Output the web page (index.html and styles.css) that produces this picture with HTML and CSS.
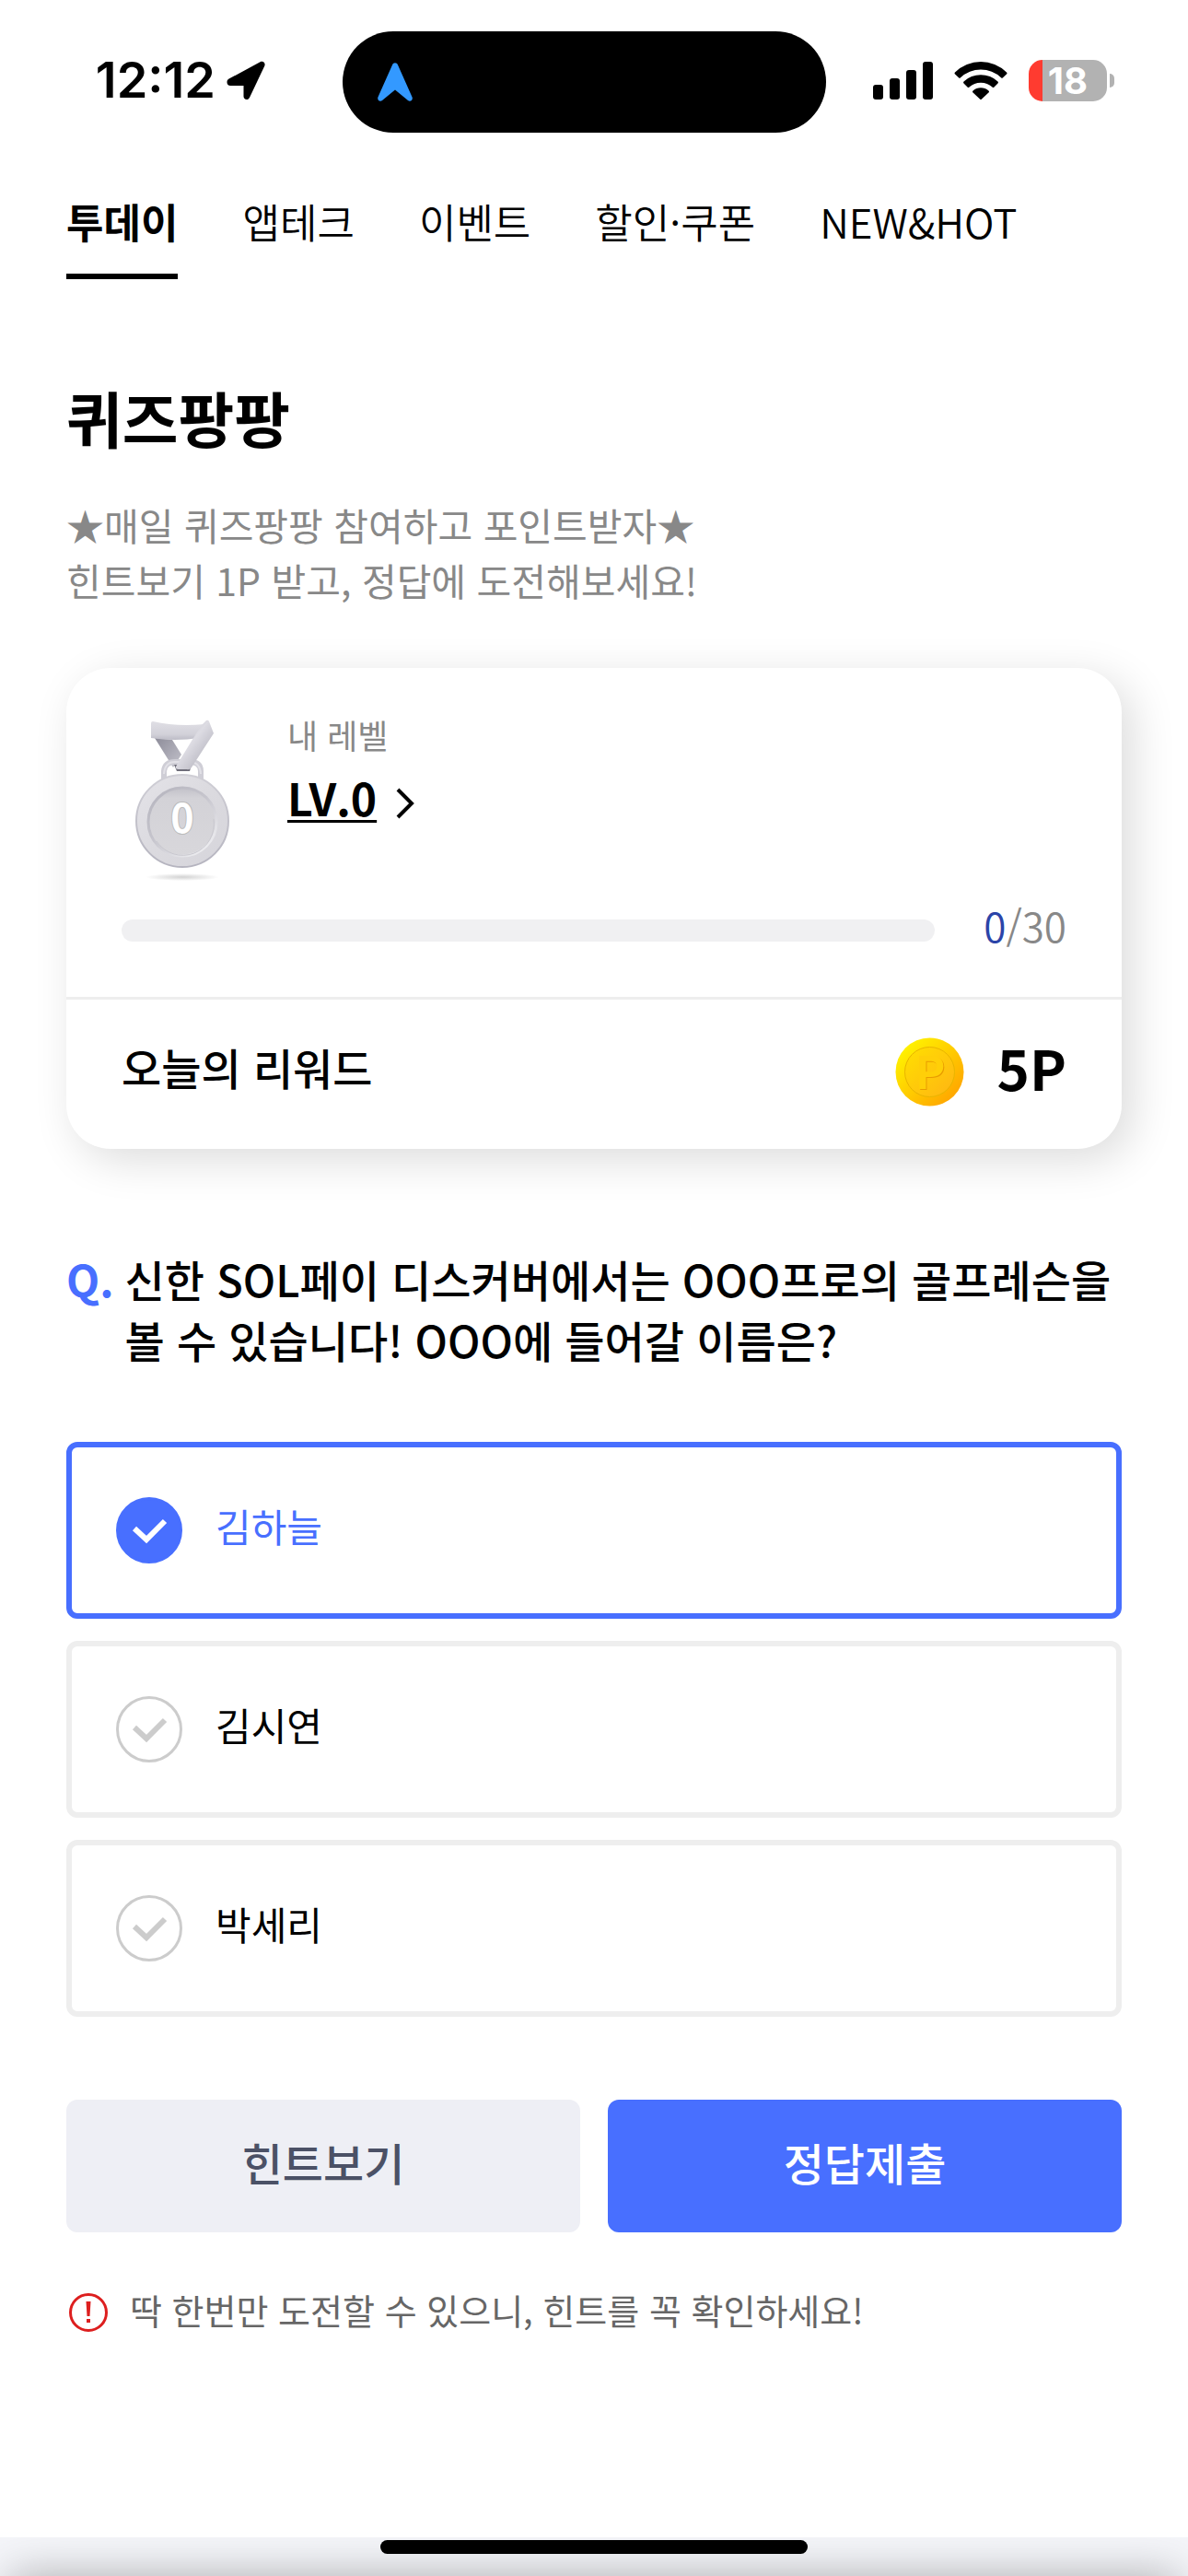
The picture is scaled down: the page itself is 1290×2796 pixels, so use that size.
FILE: index.html
```html
<!DOCTYPE html>
<html lang="ko">
<head>
  <meta charset="UTF-8">
  <meta name="viewport" content="width=device-width, initial-scale=1">
  <title>퀴즈팡팡</title>
  <link rel="stylesheet" href="styles.css">
</head>
<body>
  <header class="status-bar">
    <div class="status-left">
      <span class="time">12:12</span>
      <svg class="location" viewBox="0 0 42 42" aria-hidden="true">
        <path d="M36.5 1.2 2.6 19.6C-1 21.6 .3 27 4.2 27H18.5V38.5C18.5 42.6 23.7 43.2 25.2 39.4L41.3 5.5C42.6 2 39.6 -.4 36.5 1.2Z"/>
      </svg>
    </div>
    <div class="island">
      <svg class="nav-arrow" viewBox="0 0 38 42" aria-hidden="true">
        <path d="M16 2.5C17 -.5 21 -.5 22 2.5L37.6 37.5C38.6 40.5 35.5 43 33 41L19 29.5 5 41C2.5 43 -.6 40.5 .4 37.5Z"/>
      </svg>
    </div>
    <div class="status-right">
      <svg class="signal" viewBox="0 0 65 41" aria-hidden="true">
        <rect x="0" y="25" width="11" height="16" rx="3"/>
        <rect x="18" y="18" width="11" height="23" rx="3"/>
        <rect x="36" y="9" width="11" height="32" rx="3"/>
        <rect x="54" y="0" width="11" height="41" rx="3"/>
      </svg>
      <svg class="wifi" viewBox="0 0 58 42" aria-hidden="true">
        <path d="M1 12.5a40 40 0 0 1 56 0q1 1 0 2l-4 3.800q-1 1-2 0a32 32 0 0 0-44 0q-1 1-2 0l-4-3.800q-1-1 0-2Z"/>
        <path d="M10.500 22.500a27 27 0 0 1 37 0q1 1 0 2l-4 4q-1 1-2 0a18.500 18.500 0 0 0-25 0q-1 1-2 0l-4-4q-1-1 0-2Z"/>
        <path d="M20.500 32.500a13 13 0 0 1 17 0q1 1 0 2L30 41.400q-1 1-2 0l-7.500-6.900q-1-1 0-2Z"/>
      </svg>
      <div class="battery">
        <span class="battery-level">18</span>
        <span class="battery-tip"></span>
      </div>
    </div>
  </header>

  <nav class="tabs">
    <a href="#today" class="active">투데이</a>
    <a href="#apptech">앱테크</a>
    <a href="#event">이벤트</a>
    <a href="#coupon">할인·쿠폰</a>
    <a href="#new">NEW&amp;HOT</a>
  </nav>

  <main class="content">
    <h1>퀴즈팡팡</h1>
    <p class="intro">★매일 퀴즈팡팡 참여하고 포인트받자★<br>힌트보기 1P 받고, 정답에 도전해보세요!</p>

    <section class="card">
      <div class="level">
        <svg class="medal" viewBox="0 0 140 200" aria-hidden="true">
          <defs>
            <linearGradient id="rim" x1="0" y1="0" x2="1" y2="1">
              <stop offset="0" stop-color="#e4e3e8"/>
              <stop offset="0.5" stop-color="#dbdadf"/>
              <stop offset="1" stop-color="#d6d5db"/>
            </linearGradient>
            <linearGradient id="face" x1="0" y1="0" x2="0" y2="1">
              <stop offset="0" stop-color="#c2c1c9"/>
              <stop offset="0.15" stop-color="#d3d2d7"/>
              <stop offset="1" stop-color="#d8d7db"/>
            </linearGradient>
            <linearGradient id="groove" x1="0" y1="0" x2="0.8" y2="1">
              <stop offset="0" stop-color="#b4b3bd"/>
              <stop offset="0.5" stop-color="#c6c5cd"/>
              <stop offset="1" stop-color="#efeff2"/>
            </linearGradient>
            <linearGradient id="edge" x1="0" y1="0" x2="0" y2="1">
              <stop offset="0" stop-color="#d0cfd6"/>
              <stop offset="1" stop-color="#b5b4bf"/>
            </linearGradient>
            <linearGradient id="bow" x1="0" y1="0" x2="0" y2="1">
              <stop offset="0" stop-color="#e0dfe5"/>
              <stop offset="0.7" stop-color="#d2d1d9"/>
              <stop offset="1" stop-color="#bdbcc6"/>
            </linearGradient>
            <linearGradient id="strap" x1="0.2" y1="0.2" x2="0.8" y2="0.8">
              <stop offset="0" stop-color="#c9c8d1"/>
              <stop offset="0.4" stop-color="#dddce3"/>
              <stop offset="1" stop-color="#b9b8c2"/>
            </linearGradient>
            <linearGradient id="strapBack" x1="0" y1="0" x2="1" y2="1">
              <stop offset="0" stop-color="#8d8c99"/>
              <stop offset="1" stop-color="#c3c2cb"/>
            </linearGradient>
            <radialGradient id="ground">
              <stop offset="0" stop-color="#d2d2d2"/>
              <stop offset="1" stop-color="#fff"/>
            </radialGradient>
          </defs>
          <ellipse cx="68" cy="182" rx="40" ry="4" fill="url(#ground)"/>
          <path d="M38 31 57 33 67 49 58 63Z" fill="url(#strapBack)"/>
          <path d="M48 76V67Q49 57 60 57H76Q88 57 88 67V76" fill="none" stroke="#cfced6" stroke-width="6"/>
          <path d="M48 70Q49 57 60 57H76Q87 57 88 70" fill="none" stroke="#e2e1e7" stroke-width="2"/>
          <path d="M59 60 62 67H76L78 60Z" fill="#6f6e7a"/>
          <path d="M36 13Q62 19 92 16L86 31Q60 35 34 31V15Q34 13 36 13Z" fill="url(#bow)"/>
          <path d="M94 12Q96 11 97 13L102 26 78 63Q76 66 73 65H64Q60 65 61 62L88 18Z" fill="url(#strap)"/>
          <circle cx="68" cy="121" r="50" fill="url(#rim)" stroke="url(#edge)" stroke-width="2"/>
          <circle cx="68" cy="122" r="37" fill="url(#face)" stroke="url(#groove)" stroke-width="3"/>
          <path d="M40 143A34 34 0 0 0 102 119" fill="none" stroke="#c9c8cf" stroke-width="1"/>
          <text x="68" y="134" class="medal-number">0</text>
        </svg>
        <div class="level-info">
          <span class="level-label">내 레벨</span>
          <a href="#level" class="level-link">
            <span class="level-name">LV.0</span>
            <svg class="chevron" viewBox="0 0 22 34" aria-hidden="true"><path d="M3 2 18 17 3 32"/></svg>
          </a>
        </div>
      </div>
      <div class="progress">
        <div class="progress-bar"></div>
        <div class="progress-count"><span>0</span>/30</div>
      </div>
      <div class="reward">
        <span class="reward-label">오늘의 리워드</span>
        <svg class="coin" viewBox="0 0 75 75" aria-hidden="true">
          <defs>
            <linearGradient id="coinRim" x1="0.15" y1="0.15" x2="0.85" y2="0.85">
              <stop offset="0" stop-color="#fff000"/>
              <stop offset="1" stop-color="#ffa800"/>
            </linearGradient>
            <linearGradient id="coinFace" x1="0" y1="0" x2="1" y2="1">
              <stop offset="0" stop-color="#ffe000"/>
              <stop offset="1" stop-color="#ffb414"/>
            </linearGradient>
          </defs>
          <circle cx="37.5" cy="37.5" r="37" fill="url(#coinRim)"/>
          <circle cx="37.5" cy="37.5" r="27" fill="url(#coinFace)" stroke="#e8b400" stroke-width="1"/>
          <text x="39" y="57" class="coin-shade">P</text>
          <text x="38" y="56" class="coin-letter">P</text>
        </svg>
        <strong>5P</strong>
      </div>
    </section>

    <form class="quiz">
      <fieldset>
        <legend class="question">
          <span class="question-mark">Q.</span>
          <span>신한 SOL페이 디스커버에서는 OOO프로의 골프레슨을 볼 수 있습니다! OOO에 들어갈 이름은?</span>
        </legend>
        <label class="option">
          <input type="radio" name="answer" value="1" checked>
          <svg class="check" viewBox="0 0 72 72" aria-hidden="true"><circle cx="36" cy="36" r="34.5"/><path d="M20 34 33 46 53 26"/></svg>
          <span>김하늘</span>
        </label>
        <label class="option">
          <input type="radio" name="answer" value="2">
          <svg class="check" viewBox="0 0 72 72" aria-hidden="true"><circle cx="36" cy="36" r="34.5"/><path d="M20 34 33 46 53 26"/></svg>
          <span>김시연</span>
        </label>
        <label class="option">
          <input type="radio" name="answer" value="3">
          <svg class="check" viewBox="0 0 72 72" aria-hidden="true"><circle cx="36" cy="36" r="34.5"/><path d="M20 34 33 46 53 26"/></svg>
          <span>박세리</span>
        </label>
      </fieldset>
      <div class="buttons">
        <button type="button" class="secondary">힌트보기</button>
        <button type="submit">정답제출</button>
      </div>
    </form>

    <p class="notice">
      <svg class="warning" viewBox="0 0 42 42" aria-hidden="true">
        <circle cx="21" cy="21" r="19.5"/>
        <path d="M18.500 9h5l-1 16h-3zM19 28h4v4h-4z"/>
      </svg>
      <span>딱 한번만 도전할 수 있으니, 힌트를 꼭 확인하세요!</span>
    </p>
  </main>

  <footer class="bottom-bar">
    <div class="home-indicator"></div>
  </footer>
</body>
</html>
```

FILE: styles.css
```css
* {
  box-sizing: border-box;
}
body {
  margin: 0;
  min-height: 100vh;
  display: flex;
  flex-direction: column;
  font-family: "Noto Sans CJK KR", "Noto Sans", sans-serif;
  background-color: #fff;
  color: #000;
  word-break: keep-all;
}
a {
  color: inherit;
  text-decoration: none;
}
svg {
  flex: none;
}

/* Status bar */
.status-bar {
  display: grid;
  grid-template-columns: 1fr 525px 1fr;
  align-items: center;
  padding: 34px 21px 0 0;
  font-family: Inter, sans-serif;
}
.status-left {
  display: flex;
  align-items: center;
  justify-content: flex-end;
  gap: 12px;
  padding: 0 84px 4px 0;
}
.time {
  font-size: 54px;
  line-height: 60px;
  font-weight: 600;
}
.location {
  width: 42px;
  height: 42px;
}
.island {
  display: flex;
  align-items: center;
  height: 110px;
  padding-left: 38px;
  border-radius: 55px;
  background-color: #000;
}
.nav-arrow {
  width: 38px;
  height: 42px;
  fill: #3399ff;
}
.status-right {
  display: flex;
  align-items: center;
  gap: 23px;
  padding: 0 0 4px 51px;
}
.signal {
  width: 65px;
  height: 41px;
}
.wifi {
  width: 58px;
  height: 42px;
}
.battery {
  display: flex;
  align-items: center;
  gap: 3px;
}
.battery-level {
  width: 85px;
  border-radius: 15px;
  background: linear-gradient(to right, #ff3b30 15px, #b2b2b2 15px);
  color: #fff;
  font-size: 40px;
  line-height: 45px;
  font-weight: 700;
  text-align: center;
}
.battery-tip {
  width: 5px;
  height: 15px;
  border-radius: 0 5px 5px 0;
  background-color: #b2b2b2;
}

/* Tabs */
.tabs {
  display: flex;
  gap: 70px;
  padding: 66px 72px 0;
  font-size: 44px;
  line-height: 60px;
  font-weight: 350;
}
.tabs a {
  padding-bottom: 27px;
  border-bottom: 6px solid transparent;
}
.tabs .active {
  font-weight: 700;
  border-color: #000;
}

.content {
  flex: 1;
  padding: 0 72px;
}
h1 {
  margin: 104px 0 0;
  font-size: 66px;
  line-height: 90px;
  font-weight: 700;
}
.intro {
  margin: 42px 0 66px;
  font-size: 41px;
  line-height: 60px;
  color: #888;
}

/* Level card */
.card {
  border-radius: 48px;
  background-color: #fff;
  box-shadow: 12px 12px 48px rgba(0, 0, 0, 0.14);
}
.level {
  display: flex;
  gap: 42px;
  padding: 45px 58px 0;
}
.medal {
  width: 140px;
  height: 200px;
}
.medal-number {
  font-size: 43px;
  font-weight: 700;
  text-anchor: middle;
  fill: #fff;
  stroke: #bbb;
  stroke-width: 2px;
  paint-order: stroke;
}
.level-info {
  display: flex;
  flex-direction: column;
}
.level-label {
  font-size: 36px;
  line-height: 54px;
  color: #888;
}
.level-link {
  display: flex;
  align-items: center;
  gap: 20px;
  margin-top: 8px;
  font-size: 48px;
  line-height: 66px;
  font-weight: 700;
}
.level-name {
  padding-bottom: 14px;
  text-decoration: underline;
  text-decoration-thickness: 3px;
  text-underline-offset: 4px;
}
.chevron {
  width: 22px;
  height: 42px;
  fill: none;
  stroke: #000;
  stroke-width: 4px;
}
.progress {
  display: flex;
  align-items: center;
  gap: 53px;
  padding: 10px 60px 42px;
}
.progress-bar {
  flex: 1;
  height: 24px;
  border-radius: 12px;
  background-color: #f0f0f2;
}
.progress-count {
  padding-bottom: 12px;
  font-size: 44px;
  line-height: 48px;
  font-weight: 350;
  color: #888;
}
.progress-count span {
  color: #2b44a8;
}
.reward {
  display: flex;
  align-items: center;
  padding: 33px 60px 39px;
  border-top: 3px solid #eee;
}
.reward-label {
  flex: 1;
  padding-bottom: 10px;
  font-size: 47px;
  line-height: 66px;
  font-weight: 500;
}
.coin {
  width: 75px;
  height: 75px;
  margin-right: 36px;
}
.coin text {
  font-size: 49px;
  font-weight: 700;
  text-anchor: middle;
}
.coin-shade {
  fill: #e89c00;
}
.coin-letter {
  fill: #ffcf08;
}
.reward strong {
  padding-bottom: 10px;
  font-size: 60px;
  line-height: 80px;
}

/* Quiz */
fieldset {
  display: flex;
  flex-direction: column;
  gap: 24px;
  min-width: 0;
  margin: 0;
  padding: 0;
  border: 0;
}
.question {
  display: flex;
  gap: 12px;
  margin-bottom: 78px;
  padding: 0;
  font-size: 47px;
  line-height: 66px;
  font-weight: 500;
}
.question-mark {
  color: #486fff;
  font-weight: 700;
}
.quiz {
  margin-top: 108px;
}
.option {
  display: flex;
  align-items: center;
  gap: 36px;
  height: 192px;
  padding: 0 48px;
  border: 6px solid #eee;
  border-radius: 12px;
  font-size: 42px;
  line-height: 60px;
}
.option input {
  position: absolute;
  opacity: 0;
}
.option span {
  padding-bottom: 10px;
}
.check {
  width: 72px;
  height: 72px;
  fill: none;
  stroke: #ccc;
}
.check circle {
  stroke-width: 3px;
}
.check path {
  stroke-width: 6px;
}
.option:has(input:checked) {
  border-color: #486fff;
  color: #486fff;
}
input:checked + .check circle {
  fill: #486fff;
  stroke: #486fff;
}
input:checked + .check path {
  stroke: #fff;
}
.buttons {
  display: flex;
  gap: 30px;
  margin-top: 90px;
}
button {
  flex: 1;
  height: 144px;
  padding: 0 0 10px;
  border: none;
  border-radius: 12px;
  background-color: #486fff;
  color: #fff;
  font-family: inherit;
  font-size: 48px;
  font-weight: 500;
  cursor: pointer;
}
button.secondary {
  background-color: #eeeff5;
  color: #4b5166;
}
.notice {
  display: flex;
  align-items: center;
  gap: 24px;
  margin: 57px 0 0;
  padding-left: 3px;
  font-size: 38px;
  line-height: 54px;
  color: #666;
}
.notice span {
  padding-bottom: 6px;
}
.warning {
  width: 42px;
  height: 42px;
  fill: #dd1f1f;
}
.warning circle {
  fill: none;
  stroke: #dd1f1f;
  stroke-width: 3px;
}

/* Bottom bar */
.bottom-bar {
  position: relative;
  overflow: hidden;
  height: 42px;
  padding-top: 3px;
  background-color: #f4f5f9;
}
.bottom-bar::after {
  content: "";
  position: absolute;
  top: 100%;
  left: 12px;
  right: 12px;
  height: 60px;
  box-shadow: 0 0 48px rgba(0, 0, 0, 0.3);
}
.home-indicator {
  position: relative;
  z-index: 1;
  width: 36%;
  height: 15px;
  margin: 0 auto;
  border-radius: 8px;
  background-color: #000;
}
```
